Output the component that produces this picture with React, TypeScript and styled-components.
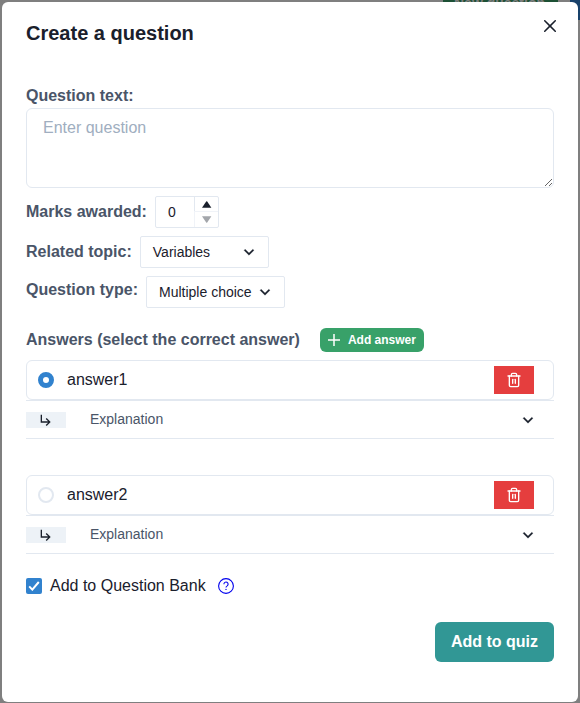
import React, { useState } from "react";
import styled, { createGlobalStyle } from "styled-components";
import { MdSubdirectoryArrowRight } from "react-icons/md";
import { FiTrash2 } from "react-icons/fi";

const GlobalStyle = createGlobalStyle`
  *, *::before, *::after { box-sizing: border-box; }
  html, body { margin: 0; height: 100%; overflow: hidden; background: #7f7f7f; }
  body, button, textarea, input {
    font-family: "Liberation Sans", Arial, sans-serif;
    font-size: 16px;
    line-height: 24px;
    color: #1a202c;
  }
  button { border: 0; padding: 0; margin: 0; background: none; cursor: pointer; }
  svg { display: block; flex-shrink: 0; }
`;

const Backdrop = styled.div`
  position: relative;
  width: 580px;
  height: 703px;
  padding: 2px 2px 1px;
  overflow: hidden;
  background: #7f7f7f;
`;

const PageButton = styled.div`
  position: absolute;
  top: -16px;
  left: 443px;
  width: 115px;
  height: 32px;
  padding-right: 2px;
  background: #1c5034;
  color: #7f7f7f;
  font-size: 14px;
  font-weight: 700;
  line-height: 39px;
  text-align: center;
`;

const PageEdge = styled.div`
  position: absolute;
  top: 0;
  left: 570px;
  width: 10px;
  height: 20px;
  background: #18416a;
`;

const Dialog = styled.section`
  position: relative;
  display: flex;
  flex-direction: column;
  width: 576px;
  height: 700px;
  border-radius: 6px;
  background: #fff;
`;

const Header = styled.header`
  display: flex;
  justify-content: space-between;
  height: 62px;
  padding: 8px 12px 16px 24px;
`;

const Title = styled.h2`
  margin: 8px 0 0;
  font-size: 20px;
  font-weight: 700;
  line-height: 30px;
`;

const CloseButton = styled.button`
  display: grid;
  place-items: center;
  width: 32px;
  height: 32px;
`;

const Body = styled.div`
  display: flex;
  flex-direction: column;
  padding: 20px 24px 0;
`;

const Label = styled.label`
  color: #4a5568;
  font-weight: 700;
  white-space: nowrap;
`;

const QuestionInput = styled.textarea`
  display: block;
  width: 528px;
  height: 80px;
  margin: 0 0 8px;
  padding: 8px 16px;
  border: 1px solid #e2e8f0;
  border-radius: 6px;
  line-height: 22px;
  background: #fff;
  outline: 0;
  resize: vertical;
  &::placeholder { color: #a0aec0; opacity: 1; }
`;

const Field = styled.div<{ $lift?: number }>`
  display: flex;
  align-items: flex-start;
  gap: 8px;
  height: 32px;
  margin-bottom: 8px;
  > ${Label} { padding-top: ${(p) => 4 - (p.$lift ?? 0)}px; }
`;

const NumberBox = styled.div`
  display: flex;
  width: 64px;
  height: 32px;
  border: 1px solid #e2e8f0;
  border-radius: 2px;
  font-size: 14px;
  line-height: 30px;
`;

const NumberValue = styled.span`
  flex: 1;
  padding-left: 12px;
`;

const Steppers = styled.div`
  display: grid;
  grid-template-rows: 14px 16px;
  width: 24px;
`;

const Stepper = styled.button<{ $disabled?: boolean }>`
  display: grid;
  place-items: center;
  border-left: 1px solid #e2e8f0;
  border-top: ${(p) => (p.$disabled ? "1px solid #e2e8f0" : "0")};
  border-color: ${(p) => (p.$disabled ? "#f0f3f8" : "#e2e8f0")};
  color: ${(p) => (p.$disabled ? "#a3a6ab" : "#1a202c")};
`;

const Select = styled.button<{ $width: number }>`
  display: flex;
  align-items: center;
  justify-content: space-between;
  width: ${(p) => p.$width}px;
  height: 32px;
  padding: 0 9px 0 12px;
  border: 1px solid #e2e8f0;
  border-radius: 2px;
  font-size: 14px;
`;

const AnswersHead = styled.div`
  display: flex;
  align-items: center;
  gap: 20px;
  height: 24px;
  margin: 12px 0 8px;
`;

const AddAnswer = styled.button`
  display: flex;
  align-items: center;
  gap: 8px;
  width: 104px;
  height: 24px;
  padding-left: 8px;
  border-radius: 6px;
  background: #38a169;
  color: #fff;
  font-size: 12px;
  font-weight: 700;
`;

const AnswerBlock = styled.div`
  height: 115px;
`;

const AnswerRow = styled.div`
  display: flex;
  align-items: center;
  height: 40px;
  padding: 0 19px 0 11px;
  border: 1px solid #e2e8f0;
  border-radius: 6px;
`;

const Radio = styled.button<{ $checked: boolean }>`
  width: 16px;
  height: 16px;
  border: ${(p) => (p.$checked ? "5px solid #3182ce" : "2px solid #e2e8f0")};
  border-radius: 50%;
  background: #fff;
`;

const AnswerText = styled.span`
  flex: 1;
  padding-left: 13px;
`;

const DeleteButton = styled.button`
  display: grid;
  place-items: center;
  width: 40px;
  height: 28px;
  background: #e53e3e;
  color: #fff;
`;

const Explanation = styled.button`
  display: flex;
  align-items: center;
  width: 528px;
  height: 39px;
  padding-right: 16px;
  border-top: 1px solid #e2e8f0;
  border-bottom: 1px solid #e2e8f0;
`;

const ArrowTag = styled.span`
  display: grid;
  place-items: center;
  width: 40px;
  height: 16px;
  background: #edf2f7;
`;

const ExplanationText = styled.span`
  flex: 1;
  padding-left: 24px;
  color: #4a5568;
  font-size: 14px;
  line-height: 21px;
  text-align: left;
  margin-top: -1px;
`;

const BankRow = styled.div`
  display: flex;
  align-items: center;
  height: 24px;
  margin-top: -16px;
`;

const Checkbox = styled.button`
  display: grid;
  place-items: center;
  width: 16px;
  height: 16px;
  margin-right: 8px;
  border-radius: 2px;
  background: #3182ce;
`;

const BankText = styled.span`
  margin-right: 12px;
`;

const Submit = styled.button`
  align-self: flex-end;
  width: 119px;
  height: 40px;
  margin-top: 24px;
  border-radius: 6px;
  background: #319795;
  color: #fff;
  font-weight: 700;
`;

const Chevron = () => (
  <svg width="20" height="20" viewBox="0 0 24 24">
    <path
      fill="currentColor"
      stroke="currentColor"
      strokeWidth=".25"
      d="M16.59 8.59L12 13.17 7.41 8.59 6 10l6 6 6-6z"
    />
  </svg>
);

const PlusIcon = () => (
  <svg width="12" height="12" viewBox="0 0 12 12" stroke="currentColor" strokeWidth="1.5">
    <path d="M6 0v12M0 6h12" />
  </svg>
);

const Triangle = ({ down = false }: { down?: boolean }) => (
  <svg width="11" height="9" viewBox="0 0 11 9">
    <path
      fill="currentColor"
      d={down ? "M1 1.3h9.4L6.2 7.4q-.5.5-1 0z" : "M1 7.8h9.4L6.2 1.4q-.5-.5-1 0z"}
    />
  </svg>
);

const CloseIcon = () => (
  <svg width="12" height="12" viewBox="0 0 24 24">
    <path
      fill="currentColor"
      d="M.439,21.44a1.5,1.5,0,0,0,2.122,2.121L11.823,14.3a.25.25,0,0,1,.354,0l9.262,9.263a1.5,1.5,0,1,0,2.122-2.121L14.3,12.177a.25.25,0,0,1,0-.354l9.263-9.262A1.5,1.5,0,0,0,21.439.44L12.177,9.7a.25.25,0,0,1-.354,0L2.561.44A1.5,1.5,0,0,0,.439,2.561L9.7,11.823a.25.25,0,0,1,0,.354Z"
    />
  </svg>
);

const HelpIcon = () => (
  <svg width="16" height="16" viewBox="0 0 16 16" fill="none" stroke="#0000ee">
    <circle cx="8" cy="8" r="7.4" strokeWidth="1.1" />
    <path d="M5.9 6.2a2.1 2.1 0 1 1 3.3 1.7C8.4 8.4 8 8.7 8 9.6" strokeWidth="1.1" />
    <circle cx="8" cy="11.4" r=".7" fill="#0000ee" stroke="none" />
  </svg>
);

const answers = ["answer1", "answer2"];

export default function App() {
  const [selected, setSelected] = useState(0);
  return (
    <>
      <GlobalStyle />
      <Backdrop>
        <PageButton>New question</PageButton>
        <PageEdge />
        <Dialog>
          <Header>
            <Title>Create a question</Title>
            <CloseButton aria-label="Close"><CloseIcon /></CloseButton>
          </Header>
          <Body>
            <Label htmlFor="question">Question text:</Label>
            <QuestionInput id="question" placeholder="Enter question" />
            <Field>
              <Label>Marks awarded:</Label>
              <NumberBox>
                <NumberValue>0</NumberValue>
                <Steppers>
                  <Stepper aria-label="Increase"><Triangle /></Stepper>
                  <Stepper aria-label="Decrease" $disabled><Triangle down /></Stepper>
                </Steppers>
              </NumberBox>
            </Field>
            <Field>
              <Label>Related topic:</Label>
              <Select $width={129}>Variables<Chevron /></Select>
            </Field>
            <Field $lift={2}>
              <Label>Question type:</Label>
              <Select $width={139}>Multiple choice<Chevron /></Select>
            </Field>
            <AnswersHead>
              <Label>Answers (select the correct answer)</Label>
              <AddAnswer><PlusIcon />Add answer</AddAnswer>
            </AnswersHead>
            {answers.map((answer, i) => (
              <AnswerBlock key={answer}>
                <AnswerRow>
                  <Radio aria-label={answer} $checked={i === selected} onClick={() => setSelected(i)} />
                  <AnswerText>{answer}</AnswerText>
                  <DeleteButton aria-label="Delete"><FiTrash2 size={16} /></DeleteButton>
                </AnswerRow>
                <Explanation>
                  <ArrowTag><MdSubdirectoryArrowRight size={16} /></ArrowTag>
                  <ExplanationText>Explanation</ExplanationText>
                  <Chevron />
                </Explanation>
              </AnswerBlock>
            ))}
            <BankRow>
              <Checkbox aria-label="Add to Question Bank">
                <svg width="12" height="10" viewBox="0 0 12 10" fill="none" stroke="#fff" strokeWidth="2">
                  <path d="M1.2 5.4 4.3 8.6 10.8 1" />
                </svg>
              </Checkbox>
              <BankText>Add to Question Bank</BankText>
              <HelpIcon />
            </BankRow>
            <Submit>Add to quiz</Submit>
          </Body>
        </Dialog>
      </Backdrop>
    </>
  );
}
